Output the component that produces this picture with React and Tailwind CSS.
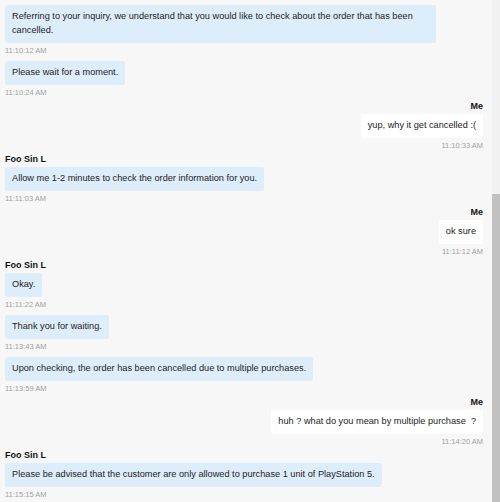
import React from "react";

const groups = [
  {
    name: null,
    me: false,
    msgs: [
      {
        text: "Referring to your inquiry, we understand that you would like to check about the order that has been cancelled.",
        time: "11:10:12 AM",
      },
      { text: "Please wait for a moment.", time: "11:10:24 AM" },
    ],
  },
  {
    name: "Me",
    me: true,
    msgs: [{ text: "yup, why it get cancelled :(", time: "11:10:33 AM" }],
  },
  {
    name: "Foo Sin L",
    me: false,
    msgs: [
      {
        text: "Allow me 1-2 minutes to check the order information for you.",
        time: "11:11:03 AM",
      },
    ],
  },
  {
    name: "Me",
    me: true,
    msgs: [{ text: "ok sure", time: "11:11:12 AM" }],
  },
  {
    name: "Foo Sin L",
    me: false,
    msgs: [
      { text: "Okay.", time: "11:11:22 AM" },
      { text: "Thank you for waiting.", time: "11:13:43 AM" },
      {
        text: "Upon checking, the order has been cancelled due to multiple purchases.",
        time: "11:13:59 AM",
      },
    ],
  },
  {
    name: "Me",
    me: true,
    msgs: [
      {
        text: "huh ? what do you mean by multiple purchase  ?",
        time: "11:14:20 AM",
      },
    ],
  },
  {
    name: "Foo Sin L",
    me: false,
    msgs: [
      {
        text: "Please be advised that the customer are only allowed to purchase 1 unit of PlayStation 5.",
        time: "11:15:15 AM",
      },
    ],
  },
];

const Message = ({ text, time, me }) => (
  <div className={me ? "flex flex-col items-end" : "flex flex-col items-start"}>
    <div
      className={
        (me ? "bg-white" : "bg-[#deedfa]") +
        " max-w-[431px] rounded-[2px] px-[7px] py-[5.25px] text-[9.2px] leading-[13.5px] text-[#222] whitespace-pre-wrap"
      }
    >
      {text}
    </div>
    <div className="mt-[3.5px] h-[9px] text-[7.5px] leading-[9px] text-[#a0a0a0]">
      {time}
    </div>
  </div>
);

export default function App() {
  return (
    <div
      className="flex h-[502px] w-[500px] overflow-hidden bg-[#f7f7f7]"
      style={{ fontFamily: '"Liberation Sans", Arial, sans-serif' }}
    >
      <div className="flex flex-1 flex-col gap-[3.5px] pl-[5px] pr-[9px] pt-[5px]">
        {groups.map((g, i) => (
          <div key={i} className={g.me ? "flex flex-col items-end" : "flex flex-col items-start"}>
            {g.name && (
              <div className="mb-[3px] text-[9px] font-bold leading-[10px] text-[#111]">
                {g.name}
              </div>
            )}
            <div className={g.me ? "flex flex-col items-end gap-[5.5px] self-stretch" : "flex flex-col items-start gap-[5.5px] self-stretch"}>
              {g.msgs.map((m, j) => (
                <Message key={j} text={m.text} time={m.time} me={g.me} />
              ))}
            </div>
          </div>
        ))}
      </div>
      {/* scrollbar */}
      <div className="flex w-[8px] flex-col bg-[#f1f1f1]">
        <div className="h-[194px]" />
        <div className="flex-1 bg-[#c1c1c1]" />
      </div>
    </div>
  );
}
